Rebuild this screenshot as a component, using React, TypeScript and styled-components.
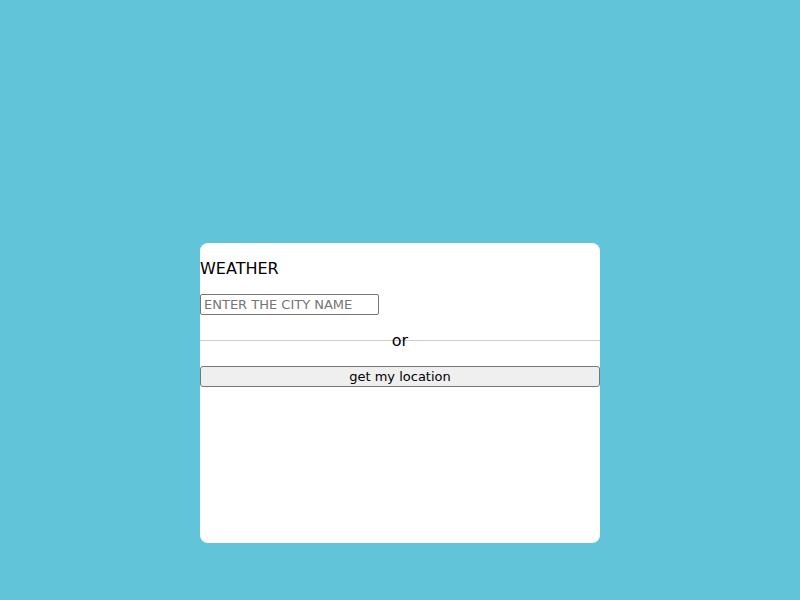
import React from 'react'
import styled, { createGlobalStyle } from 'styled-components'

const GlobalStyle = createGlobalStyle`
    html, body {
        margin: 0;
        padding: 0;
        background: #62c4d9;
        font-family: 'DejaVu Sans', sans-serif;
    }
`

const Page = styled.div`
    height: 100vh;
    display: flex;
    justify-content: center;
    align-items: flex-start;
    padding-top: 243px;
    box-sizing: border-box;
`

const Card = styled.main`
    width: 400px;
    height: 300px;
    background: white;
    border-radius: 8px;
    display: flex;
    flex-direction: column;
    align-items: flex-start;
`

const Title = styled.p`
    margin: 16px 0;
    font-size: 16px;
    color: #000;
`

const CityInput = styled.input`
    font-family: 'DejaVu Sans', sans-serif;
    font-size: 13px;
    width: 179px;
    height: 21px;
    box-sizing: border-box;
    padding: 1px 2px 1px 3px;
    border: 1px solid #767676;
    border-radius: 2px;
    margin: 0;

    &::placeholder {
        color: #757575;
    }
`

const Divider = styled.p`
    margin: 16px 0;
    width: 100%;
    height: 19px;
    line-height: 19px;
    text-align: center;
    font-size: 16px;
    color: #000;
    background: linear-gradient(
        to bottom,
        transparent 9px,
        #cccccc 9px,
        #cccccc 10px,
        transparent 10px
    );
`

const LocationButton = styled.button`
    width: 100%;
    height: 21px;
    margin: 0;
    padding: 1px 6px;
    box-sizing: border-box;
    font-family: 'DejaVu Sans', sans-serif;
    font-size: 13px;
    color: #000;
    background: #efefef;
    border: 1px solid #767676;
    border-radius: 3px;
`

export default function App() {
    return (
        <>
            <GlobalStyle />
            <Page>
                <Card>
                    <Title>WEATHER</Title>
                    <CityInput placeholder="ENTER THE CITY NAME" />
                    <Divider>or</Divider>
                    <LocationButton>get my location</LocationButton>
                </Card>
            </Page>
        </>
    )
}
